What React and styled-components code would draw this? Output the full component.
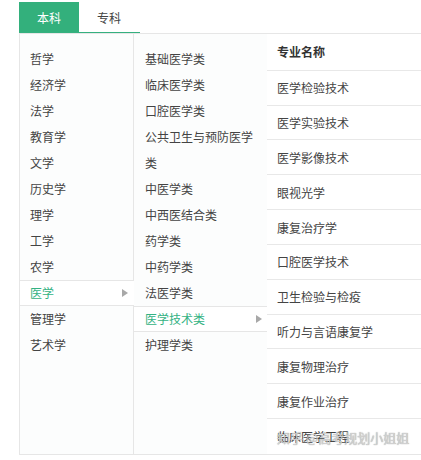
import React from "react";
import styled, { createGlobalStyle } from "styled-components";

const Global = createGlobalStyle`
  html, body { margin: 0; padding: 0; background: #fff; }
  body { font-family: "Noto Sans CJK SC", "Noto Sans", sans-serif; color: #444; }
  * { box-sizing: border-box; }
`;

const Page = styled.div`
  padding: 2px 0 0 19px;
  width: 421px;
  height: 460px;
  overflow: hidden;
`;

const TabBar = styled.div`
  display: flex;
  width: 121px;
  border-bottom: 1px solid #35b07f;
`;

const Tab = styled.div`
  width: 60px;
  height: 30px;
  display: flex;
  align-items: center;
  justify-content: center;
  font-size: 12px;
  color: ${(p) => (p.$active ? "#fff" : "#444")};
  background: ${(p) => (p.$active ? "#33b07c" : "#fff")};
`;

const Panel = styled.div`
  display: flex;
  height: 422px;
  border-top: 1px solid #e6e6e6;
  border-left: 1px solid #e6e6e6;
  border-bottom: 1px solid #e6e6e6;
`;

const Column = styled.div`
  width: ${(p) => p.$w}px;
  flex: none;
  padding-top: 12px;
  background: #fcfdfd;
  border-right: 1px solid ${(p) => (p.$noBorder ? "transparent" : "#e6e6e6")};
`;

const Item = styled.div`
  position: relative;
  display: flex;
  align-items: center;
  min-height: 26px;
  line-height: 26px;
  padding: 0 12px 0 ${(p) => p.$pl}px;
  font-size: 12px;
  color: ${(p) => (p.$active ? "#34b283" : "#444")};
  background: ${(p) => (p.$active ? "#fff" : "transparent")};
  box-shadow: ${(p) => (p.$active ? "inset 0 1px #e6e6e6, inset 0 -1px #e6e6e6" : "none")};
  margin-right: ${(p) => (p.$active ? "-1px" : "0")};
  z-index: ${(p) => (p.$active ? 1 : 0)};
`;

const WrapText = styled.span`
  line-height: 26px;
  word-break: break-all;
`;

const Arrow = styled.span`
  position: absolute;
  right: ${(p) => p.$r}px;
  top: 50%;
  margin-top: -4px;
  width: 0;
  height: 0;
  border-top: 4px solid transparent;
  border-bottom: 4px solid transparent;
  border-left: 6px solid #a8a8a8;
`;

const Table = styled.div`
  flex: 1;
  display: flex;
  flex-direction: column;
  background: #fff;
`;

const Row = styled.div`
  position: relative;
  height: ${(p) => (p.$head ? 37 : 35)}px;
  display: flex;
  align-items: center;
  padding-left: 10px;
  font-size: 12px;
  font-weight: ${(p) => (p.$head ? 700 : 400)};
  color: ${(p) => (p.$head ? "#333" : "#444")};
  border-bottom: ${(p) => (p.$last ? "none" : "1px solid #e8e8e8")};
`;

const Watermark = styled.span`
  position: absolute;
  left: 10px;
  top: 50%;
  transform: translateY(-50%);
  font-size: 13px;
  color: rgba(215, 215, 215, 0.9);
  text-shadow: 0 0 1px rgba(110, 110, 110, 0.8);
  white-space: nowrap;
`;

const left = ["哲学", "经济学", "法学", "教育学", "文学", "历史学", "理学", "工学", "农学", "医学", "管理学", "艺术学"];
const mid = ["基础医学类", "临床医学类", "口腔医学类", "公共卫生与预防医学类", "中医学类", "中西医结合类", "药学类", "中药学类", "法医学类", "医学技术类", "护理学类"];
const majors = ["医学检验技术", "医学实验技术", "医学影像技术", "眼视光学", "康复治疗学", "口腔医学技术", "卫生检验与检疫", "听力与言语康复学", "康复物理治疗", "康复作业治疗", "临床医学工程"];

export default function App() {
  return (
    <>
      <Global />
      <Page>
        <TabBar>
          <Tab $active>本科</Tab>
          <Tab>专科</Tab>
        </TabBar>
        <Panel>
          <Column $w={114}>
            {left.map((t) => (
              <Item key={t} $pl={10} $active={t === "医学"}>
                {t}
                {t === "医学" && <Arrow $r={6} />}
              </Item>
            ))}
          </Column>
          <Column $w={133} $noBorder>
            {mid.map((t) => (
              <Item key={t} $pl={11} $active={t === "医学技术类"}>
                <WrapText>{t}</WrapText>
                {t === "医学技术类" && <Arrow $r={5} />}
              </Item>
            ))}
          </Column>
          <Table>
            <Row $head>专业名称</Row>
            {majors.map((m, i) => (
              <Row key={m} $last={i === majors.length - 1}>
                {m}
                {i === majors.length - 1 && <Watermark>知乎 @高考规划小姐姐</Watermark>}
              </Row>
            ))}
          </Table>
        </Panel>
      </Page>
    </>
  );
}
